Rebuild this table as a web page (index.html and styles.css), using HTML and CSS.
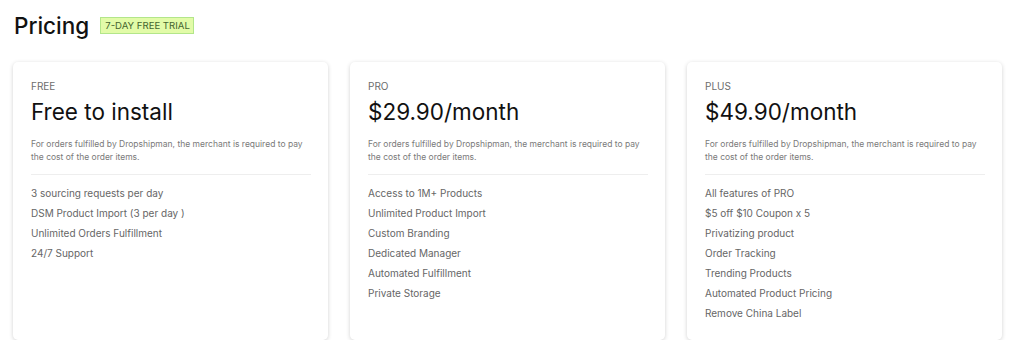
FILE: index.html
```html
<!DOCTYPE html>
<html lang="en">

<head>
    <meta charset="UTF-8">
    <link rel="stylesheet" href="styles.css">
    <title>Pricing</title>
</head>

<body>
    <section class="pricing">
        <div class="heading">
            <h1>Pricing</h1>
            <span class="badge">7-DAY FREE TRIAL</span>
        </div>

        <div class="plans">
            <div class="plan">
                <div class="plan-name">FREE</div>
                <div class="plan-price">Free to install</div>
                <p class="plan-note">For orders fulfilled by Dropshipman, the merchant is required to pay the cost of the order items.</p>
                <ul class="features">
                    <li>3 sourcing requests per day</li>
                    <li>DSM Product Import (3 per day )</li>
                    <li>Unlimited Orders Fulfillment</li>
                    <li>24/7 Support</li>
                </ul>
            </div>
            <div class="plan">
                <div class="plan-name">PRO</div>
                <div class="plan-price">$29.90/month</div>
                <p class="plan-note">For orders fulfilled by Dropshipman, the merchant is required to pay the cost of the order items.</p>
                <ul class="features">
                    <li>Access to 1M+ Products</li>
                    <li>Unlimited Product Import</li>
                    <li>Custom Branding</li>
                    <li>Dedicated Manager</li>
                    <li>Automated Fulfillment</li>
                    <li>Private Storage</li>
                </ul>
            </div>
            <div class="plan">
                <div class="plan-name">PLUS</div>
                <div class="plan-price">$49.90/month</div>
                <p class="plan-note">For orders fulfilled by Dropshipman, the merchant is required to pay the cost of the order items.</p>
                <ul class="features">
                    <li>All features of PRO</li>
                    <li>$5 off $10 Coupon x 5</li>
                    <li>Privatizing product</li>
                    <li>Order Tracking</li>
                    <li>Trending Products</li>
                    <li>Automated Product Pricing</li>
                    <li>Remove China Label</li>
                </ul>
            </div>
        </div>
    </section>
</body>

</html>
```

FILE: styles.css
```css
* {
    font-family: 'Inter', 'Noto Sans', sans-serif;
    box-sizing: border-box;
}

body {
    margin: 0;
    background-color: #fff;
    color: #1a1a1a;
}

.pricing {
    padding: 11px 22px 0 13px;
}

.heading {
    display: flex;
    align-items: center;
    gap: 11px;
    padding-left: 1px;
    height: 28px;
}

.heading h1 {
    margin: 0;
    font-size: 22.5px;
    font-weight: 500;
    color: #111;
}

.badge {
    font-size: 9.6px;
    line-height: 15px;
    padding: 0 3px 0 4px;
    color: #45652f;
    background-color: #e2fba8;
    border: 1px solid #b3e68a;
}

.plans {
    display: grid;
    grid-template-columns: repeat(3, 1fr);
    gap: 22px;
    margin-top: 23px;
}

.plan {
    background-color: #fff;
    border-radius: 5px;
    box-shadow: 0 1px 4px rgba(0, 0, 0, 0.18);
    padding: 17px 17px 17px 18px;
}

.plan-name {
    font-size: 10px;
    line-height: 14px;
    color: #6d6d6d;
}

.plan-price {
    font-size: 22.5px;
    line-height: 28px;
    margin-top: 5px;
    color: #111;
}

.plan-note {
    margin: 12px 0 0;
    font-size: 8.5px;
    line-height: 12.5px;
    color: #7a7a7a;
}

.features {
    list-style: none;
    margin: 11px 0 0;
    padding: 8px 0 0;
    border-top: 1px solid #eee;
}

.features li {
    font-size: 10px;
    line-height: 20px;
    color: #666;
}
```
